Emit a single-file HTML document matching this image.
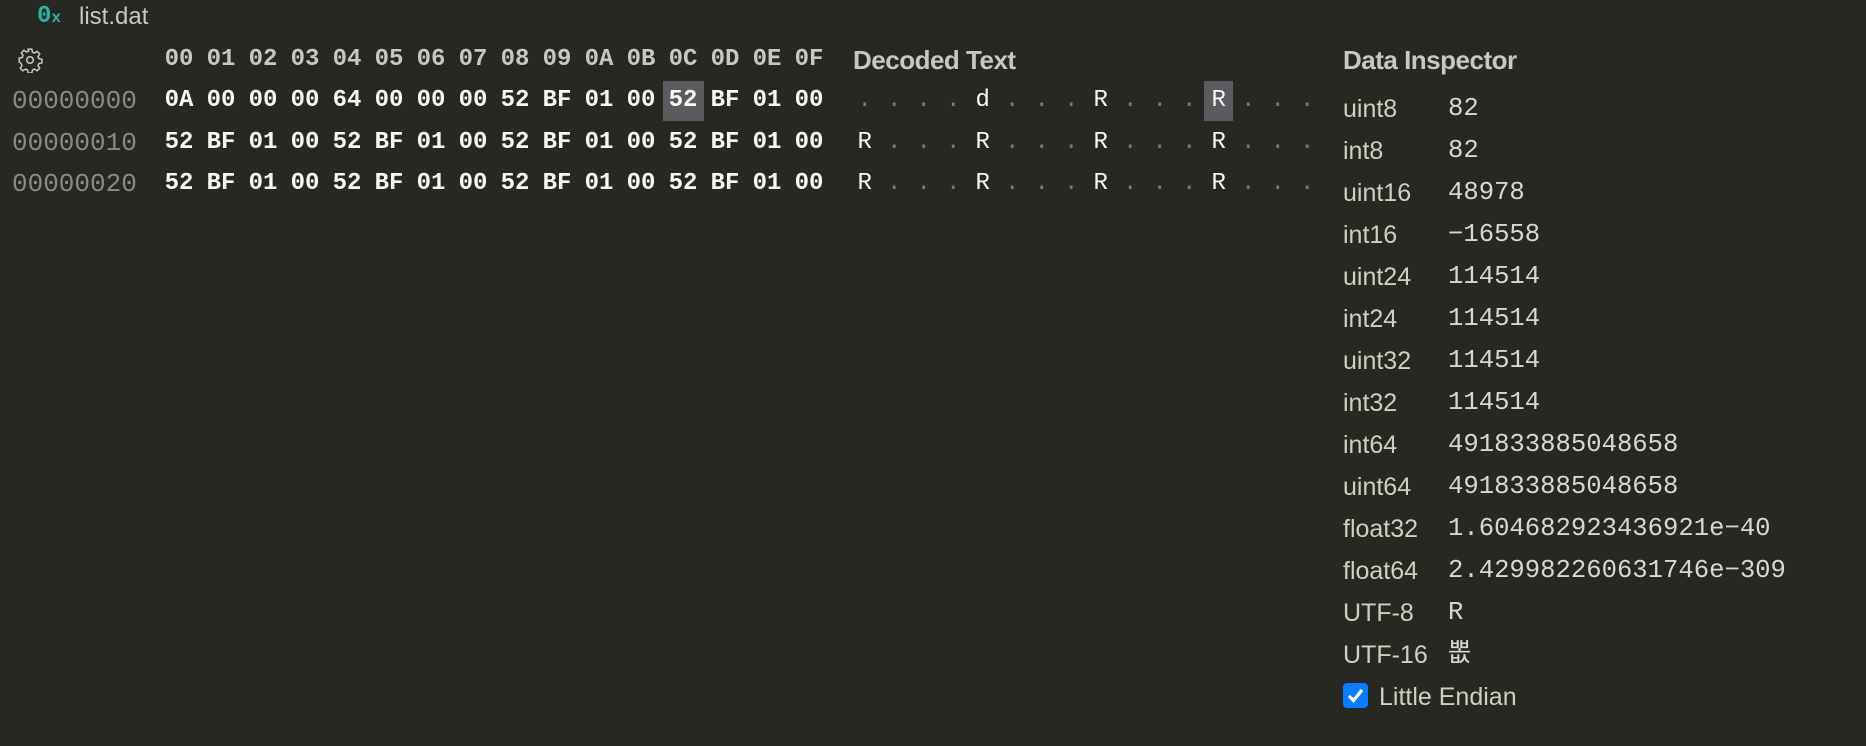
<!DOCTYPE html>
<html><head><meta charset="utf-8"><style>
body{margin:0;width:1866px;height:746px;background:#272822;position:relative;overflow:hidden;font-family:"Liberation Sans",sans-serif;color:#f8f8f2}
.a{position:absolute;white-space:pre}
.mono{font-family:"Liberation Mono","Noto Sans CJK KR",monospace}
.hx{position:absolute;width:42px;text-align:center;font-family:"Liberation Mono",monospace;font-size:24px;font-weight:bold;line-height:30px}
.dc{position:absolute;width:29.5px;text-align:center;font-family:"Liberation Mono",monospace;font-size:24px;line-height:30px}
.dot{color:#777}
.lb{position:absolute;left:1343px;font-size:25px;color:#cfcfc2;line-height:30px}
.vl{position:absolute;left:1448px;font-family:"Liberation Mono","Noto Sans CJK KR",monospace;font-size:25.6px;color:#d8d8d0;line-height:30px}
</style></head><body>
<div class="a mono" style="left:37px;top:3px;font-size:24px;font-weight:bold;color:#2bb3a3;line-height:28px">0<span style="font-size:16px">x</span></div>
<div class="a" style="left:79px;top:3px;font-size:24px;color:#c8c8c0;line-height:28px">list.dat</div>
<svg class="a" style="left:17px;top:47px" width="26" height="26" viewBox="0 0 24 24" fill="none" stroke="#c8c8c0" stroke-width="1.4"><circle cx="12" cy="12" r="3"/><path d="M10.3 2h3.4l.6 2.8 1.9.8 2.4-1.6 2.4 2.4-1.6 2.4.8 1.9 2.8.6v3.4l-2.8.6-.8 1.9 1.6 2.4-2.4 2.4-2.4-1.6-1.9.8-.6 2.8h-3.4l-.6-2.8-1.9-.8-2.4 1.6-2.4-2.4 1.6-2.4-.8-1.9L2 13.7v-3.4l2.8-.6.8-1.9L4 5.4 6.4 3l2.4 1.6 1.9-.8z"/></svg>
<div class="a" style="left:853px;top:45px;font-size:26px;font-weight:bold;color:#c8c8c0;line-height:30px;letter-spacing:-0.5px">Decoded Text</div>
<div class="a" style="left:1343px;top:45px;font-size:26px;font-weight:bold;color:#c8c8c0;line-height:30px;letter-spacing:-0.5px">Data Inspector</div>
<div style="position:absolute;left:663px;top:81px;width:41px;height:40px;background:#595b5e"></div>
<div style="position:absolute;left:1204px;top:81px;width:29px;height:40px;background:#595b5e"></div>
<div id="c"></div>
<script>
var o='',h=['00','01','02','03','04','05','06','07','08','09','0A','0B','0C','0D','0E','0F'];
for(var i=0;i<16;i++)o+='<div class="hx" style="left:'+(158+i*42)+'px;top:45px;color:#c8c8c0">'+h[i]+'</div>';
var rows=[['0A','00','00','00','64','00','00','00','52','BF','01','00','52','BF','01','00'],[],[]];
for(var r=1;r<3;r++)for(var k=0;k<4;k++)rows[r].push('52','BF','01','00');
var offs=['00000000','00000010','00000020'];
for(var r=0;r<3;r++){var y=86+r*41.5;
o+='<div class="a mono" style="left:12px;top:'+y+'px;font-size:26px;color:#8a8a85;line-height:30px">'+offs[r]+'</div>';
for(var i=0;i<16;i++){o+='<div class="hx" style="left:'+(158+i*42)+'px;top:'+y+'px">'+rows[r][i]+'</div>';
var b=rows[r][i],ch=b=='52'?'R':b=='64'?'d':'.';
o+='<div class="dc'+(ch=='.'?' dot':'')+'" style="left:'+(850+i*29.5)+'px;top:'+y+'px">'+ch+'</div>';}}
var L=[['uint8','82'],['int8','82'],['uint16','48978'],['int16','\u221216558'],['uint24','114514'],['int24','114514'],['uint32','114514'],['int32','114514'],['int64','491833885048658'],['uint64','491833885048658'],['float32','1.604682923436921e\u221240'],['float64','2.429982260631746e\u2212309'],['UTF-8','R'],['UTF-16','\ubf52']];
for(var j=0;j<L.length;j++){var y=93+j*42;o+='<div class="lb" style="top:'+(y+1)+'px">'+L[j][0]+'</div><div class="vl" style="top:'+(y+1)+'px">'+L[j][1]+'</div>';}
o+='<div style="position:absolute;left:1343px;top:683px;width:25px;height:25px;background:#0a7cff;border-radius:4px"><svg width="25" height="25" viewBox="0 0 25 25"><path d="M6 13l4.5 4.5L19 7" stroke="#fff" stroke-width="3.2" fill="none"/></svg></div>';
o+='<div class="lb" style="left:1379px;top:682px;font-size:25px">Little Endian</div>';
document.getElementById('c').innerHTML=o;
</script>
</body></html>
